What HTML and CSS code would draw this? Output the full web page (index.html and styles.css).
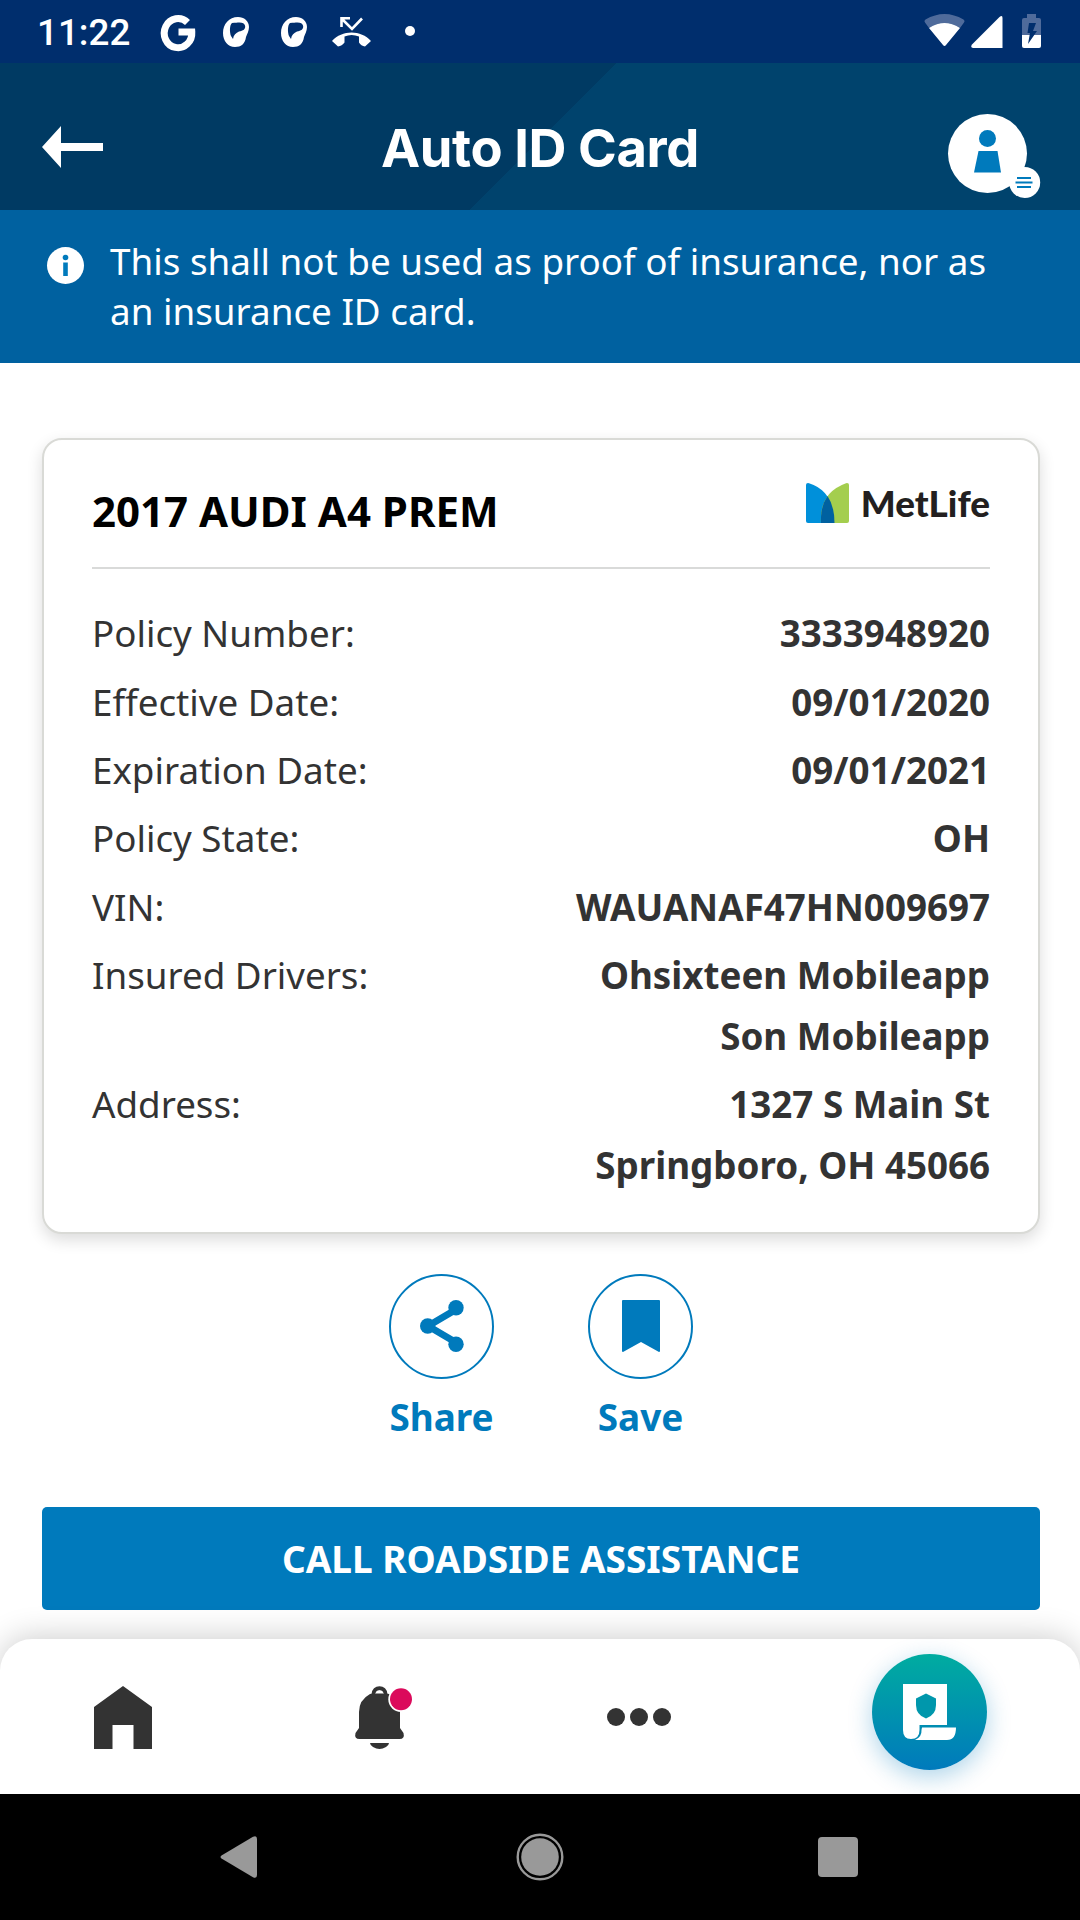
FILE: index.html
```html
<!DOCTYPE html>
<html lang="en">
<head>
<meta charset="utf-8">
<title>Auto ID Card</title>
<link rel="stylesheet" href="styles.css">
</head>
<body>
<div class="app">
  <div class="status">
    <span class="clock">11:22</span>
    <svg class="google" width="36" height="36" viewBox="0 0 36 36"><path d="M27.500 8.500A13.800 14.600 0 1 0 31.800 18H18.500" fill="none" stroke="#fff" stroke-width="7"/></svg>
    <svg class="blob" width="26" height="30" viewBox="0 0 26 30"><path fill="#fff" fill-rule="evenodd" d="M15 0C21 0 26 4 26 10C26 14 24 17 23 20C22 27 18 30 12 30C5 30 0 24 0 16C0 7 6 0 15 0ZM9 6C6.500 8 6.500 15 8 19L10 22C10.500 18 13 16 16 14.500C20 14 23 12 22 8.500C21 5 18 5 9 6Z"/></svg>
    <svg class="blob" width="26" height="30" viewBox="0 0 26 30"><path fill="#fff" fill-rule="evenodd" d="M15 0C21 0 26 4 26 10C26 14 24 17 23 20C22 27 18 30 12 30C5 30 0 24 0 16C0 7 6 0 15 0ZM9 6C6.500 8 6.500 15 8 19L10 22C10.500 18 13 16 16 14.500C20 14 23 12 22 8.500C21 5 18 5 9 6Z"/></svg>
    <svg class="missed" width="39" height="30" viewBox="0 0 39 30"><path d="M9.500 10V1.300H18M10 2l10 10L30 1.500" fill="none" stroke="#fff" stroke-width="2.600"/><path d="M0 24C10 12.500 29 12.500 39 24L33 29.500Q29 29 27 25.500V19.500Q19.500 16.500 12.500 19.500V25.500Q10 29 6 29.500Z" fill="#fff"/></svg>
    <span class="dot"></span>
    <div class="system">
      <svg width="41" height="34" viewBox="0 0 41 34"><path d="M1 8.500Q-.5 7 1.500 5.500Q20.500-5.500 39.500 5.500Q41.500 7 40 8.500L36 14Q20.500 4 5 14Z" fill="#4f6b9b"/><path d="M5 14Q20.500 4 36 14L22 31Q20.500 33 19 31Z" fill="#fff"/></svg>
      <svg class="signal" width="32" height="32" viewBox="0 0 32 32"><path d="M28.500 1Q31.500-1.500 31.500 2V32H2Q-1 31.500 1 28.500Z" fill="#fff"/></svg>
      <svg class="battery" width="19" height="34" viewBox="0 0 19 34"><path d="M5 0h9v4h3q2 0 2 2v15H0V6q0-2 2-2h3z" fill="#4f6b9b"/><path d="M0 21h19v11q0 2-2 2H2q-2 0-2-2z" fill="#fff"/><path d="M7 9h7l-3 8h4L6 30l2-11H5.500z" fill="#002e6d"/></svg>
    </div>
  </div>

  <header class="header">
    <svg width="61" height="42" viewBox="0 0 61 42"><path d="M0 21L19 0V17H61V25H19V42Z" fill="#fff"/></svg>
    <h1>Auto ID Card</h1>
    <svg width="93" height="86" viewBox="0 0 93 86"><circle cx="39.500" cy="39.500" r="39.500" fill="#fff"/><circle cx="76.700" cy="68.500" r="15.500" fill="#fff"/><circle cx="39.500" cy="24.500" r="8.500" fill="#007abc"/><path d="M30.500 37H49.500L53 58.500H26Z" fill="#007abc"/><path d="M69 64h14M67.500 68.500h17M69 73h14" stroke="#007abc" stroke-width="2"/></svg>
  </header>

  <div class="notice">
    <svg width="37" height="37" viewBox="0 0 37 37"><circle cx="18.500" cy="18.500" r="18.500" fill="#fff"/><circle cx="18.500" cy="10.500" r="2.800" fill="#007abc"/><path d="M16.200 15.500h4.600V29h-4.600z" fill="#007abc"/></svg>
    <p>This shall not be used as proof of insurance, nor as an insurance ID card.</p>
  </div>

  <main class="content">
    <section class="card">
      <div class="card-head">
        <h2>2017 AUDI A4 PREM</h2>
        <div class="logo">
          <svg width="43" height="40" viewBox="0 0 43 40"><path d="M0 2Q0-.3 3 .2Q28 8 28.500 40H2Q0 40 0 38Z" fill="#0090da"/><path d="M43 2Q43-.3 40 .2Q13 10 15 40H41Q43 40 43 38Z" fill="#a4ce4e"/><path d="M21.500 13Q28.500 23 28.500 40H15Q14 24 21.500 13Z" fill="#0061a0"/></svg>
          <span>MetLife</span>
        </div>
      </div>
      <dl>
        <div class="row"><dt>Policy Number:</dt><dd>3333948920</dd></div>
        <div class="row"><dt>Effective Date:</dt><dd>09/01/2020</dd></div>
        <div class="row"><dt>Expiration Date:</dt><dd>09/01/2021</dd></div>
        <div class="row"><dt>Policy State:</dt><dd>OH</dd></div>
        <div class="row"><dt>VIN:</dt><dd>WAUANAF47HN009697</dd></div>
        <div class="row"><dt>Insured Drivers:</dt><dd>Ohsixteen Mobileapp<br>Son Mobileapp</dd></div>
        <div class="row"><dt>Address:</dt><dd>1327 S Main St<br>Springboro, OH 45066</dd></div>
      </dl>
    </section>

    <div class="actions">
      <div class="action">
        <span class="ring"><svg width="44" height="52" viewBox="0 0 44 52"><path d="M36 9.500L8 26L36 42.500" fill="none" stroke="#007abc" stroke-width="6.800"/><g fill="#007abc"><circle cx="36" cy="7.700" r="7.700"/><circle cx="7.700" cy="26" r="7.700"/><circle cx="36" cy="44.300" r="7.700"/></g></svg></span>
        <span>Share</span>
      </div>
      <div class="action">
        <span class="ring"><svg width="38" height="52" viewBox="0 0 38 52"><path d="M1 0H37Q38 0 38 1V51Q38 52 37 52L19 42L1 52Q0 52 0 51V1Q0 0 1 0Z" fill="#007abc"/></svg></span>
        <span>Save</span>
      </div>
    </div>

    <button class="cta">CALL ROADSIDE ASSISTANCE</button>
  </main>

  <nav class="tabs">
    <svg class="home" width="58" height="63" viewBox="0 0 58 63"><path d="M29 0L58 21V63H39.500V39H18.500V63H0V21Z" fill="#333"/></svg>
    <svg class="bell" width="58" height="63" viewBox="0 0 58 63"><path d="M18.500 10V8.500C18.500 0 30.500 0 30.500 8.500V10" fill="none" stroke="#333" stroke-width="4"/><path d="M4 42V26Q4 14 15 8Q24.500 5.500 34 8Q45 14 45 26V42L48.500 47Q50 53 44.500 53H4.500Q-1 53 .5 47Z" fill="#333"/><path d="M20 7.500Q24.500 1.500 29 7.500Z" fill="#fff"/><path d="M15 57H34Q34 59 31 61Q24.500 65 18 61Q15 59 15 57Z" fill="#333"/><circle cx="46" cy="13.200" r="12.700" fill="#fff"/><circle cx="46" cy="13.200" r="11" fill="#db0a5b"/></svg>
    <svg class="more" width="64" height="18" viewBox="0 0 64 18" fill="#333"><circle cx="9" cy="9" r="9"/><circle cx="32" cy="9" r="9"/><circle cx="55" cy="9" r="9"/></svg>
    <div class="fab"><svg width="53" height="56" viewBox="0 0 53 56"><path d="M0 0H44V41H16.500V46Q16.500 55 8 55Q0 55 0 46Z" fill="#fff"/><path d="M19 43.500H53Q53 56 44 56H12Q19 53 18.500 46Z" fill="#fff"/><path d="M23 9.500L33 14.500V21Q33 31 23 34.500Q13 31 13 21V14.500Z" fill="#0097ac"/></svg></div>
  </nav>

  <div class="system-nav">
    <svg width="37" height="42" viewBox="0 0 37 42"><path d="M1.500 19.500L33 .8Q37-1 37 3V39Q37 43 33 41.200L1.500 22.500Q-.5 21 1.500 19.500Z" fill="#999"/></svg>
    <svg class="home-key" width="48" height="48" viewBox="0 0 48 48"><circle cx="24" cy="24" r="22.300" fill="none" stroke="#999" stroke-width="2.400"/><circle cx="24" cy="24" r="18.800" fill="#999"/></svg>
    <span class="recent"></span>
  </div>
</div>
</body>
</html>
```
FILE: styles.css
```css
* { box-sizing: border-box; margin: 0; padding: 0; }
body { width: 1080px; height: 1920px; overflow: hidden; background: #fff; font-family: "Noto Sans", sans-serif; color: #333; }
svg { display: block; flex: none; overflow: visible; }
.app { display: flex; flex-direction: column; height: 1920px; }

.status { display: flex; align-items: flex-start; height: 63px; padding: 14px 39px 0 37px; background: #002e6d; }
.clock { width: 123px; margin-top: -3px; font: 500 36.8px/44px Roboto, sans-serif; color: #fff; }
.google { margin-right: 27px; }
.blob { margin: 3px 32px 0 0; }
.missed { margin: 3px 0 0 -7px; }
.dot { width: 10px; height: 10px; margin: 12px 0 0 34px; border-radius: 50%; background: #fff; }
.system { display: flex; margin-left: auto; }
.signal { margin: 2px 0 0 6px; }
.battery { margin-left: 19px; }

.header { display: grid; grid-template-columns: 93px 1fr 93px; align-items: start; height: 147px; padding: 51px 39px 0 42px; background: linear-gradient(135deg, #003a63 calc(50% + 2.3px), #00436d calc(50% + 2.3px)); }
.header svg:first-child { margin-top: 12px; }
.header h1 { margin: 4px 3px 0 0; font: 700 52.5px/60px Inter, sans-serif; letter-spacing: -.4px; color: #fff; text-align: center; white-space: nowrap; }

.notice { display: flex; height: 153px; padding: 28px 60px 0 47px; background: #0061a0; color: #fff; }
.notice svg { margin-top: 9px; }
.notice p { margin: -2px 0 0 26px; font-size: 36.8px; line-height: 50px; }

.content { display: flex; flex-direction: column; flex: 1; padding: 75px 40px 0 42px; }
.card { height: 796px; padding: 0 48px; border: 2px solid #d9dad6; border-radius: 20px; box-shadow: 0 6px 16px rgba(0, 0, 0, .14); background: #fff; }
.card-head { display: flex; justify-content: space-between; height: 129px; padding-top: 43px; border-bottom: 2px solid #d9dad9; }
.card-head h2 { margin-top: -1px; font-size: 42px; line-height: 58px; color: #000; }
.logo { display: flex; gap: 12px; }
.logo span { font: 900 36.8px/40px Lato, sans-serif; color: #231f20; }
dl { padding-top: 34.4px; font-size: 36.75px; }
.row { display: flex; justify-content: space-between; margin-bottom: 7.300px; line-height: 61px; }
.row dd { font-weight: 700; text-align: right; }

.actions { display: flex; justify-content: center; gap: 94px; margin-top: 40px; }
.action { display: flex; flex-direction: column; align-items: center; width: 105px; font-size: 36.9px; font-weight: 700; line-height: 50px; color: #007abc; }
.ring { display: flex; justify-content: center; width: 105px; height: 105px; margin-bottom: 13px; padding-top: 24px; border: 2px solid #007abc; border-radius: 50%; }
.cta { height: 103px; margin-top: 65px; border: 0; border-radius: 5px; background: #007abc; color: #fff; font: 700 37px/50px "Noto Sans", sans-serif; }

.tabs { display: flex; align-items: flex-start; height: 155px; border-radius: 32px 32px 0 0; background: #fff; box-shadow: 0 -2px 32px rgba(0, 0, 0, .2); }
.home { margin: 47px 0 0 94px; }
.bell { margin: 47px 0 0 203px; }
.more { margin: 69px 0 0 193.5px; }
.fab { display: flex; width: 115px; height: 116px; margin: 15px 0 0 201.5px; padding: 30px 0 0 31px; border-radius: 50%; background: linear-gradient(#00aca0, #007abc); box-shadow: 0 7px 24px rgba(0, 122, 188, .32); }
.system-nav { display: flex; justify-content: space-between; align-items: center; height: 126px; padding: 0 222px 0 220px; background: #000; }
.home-key { margin-left: 4px; }
.recent { width: 40px; height: 40px; border-radius: 4px; background: #999; }
```
